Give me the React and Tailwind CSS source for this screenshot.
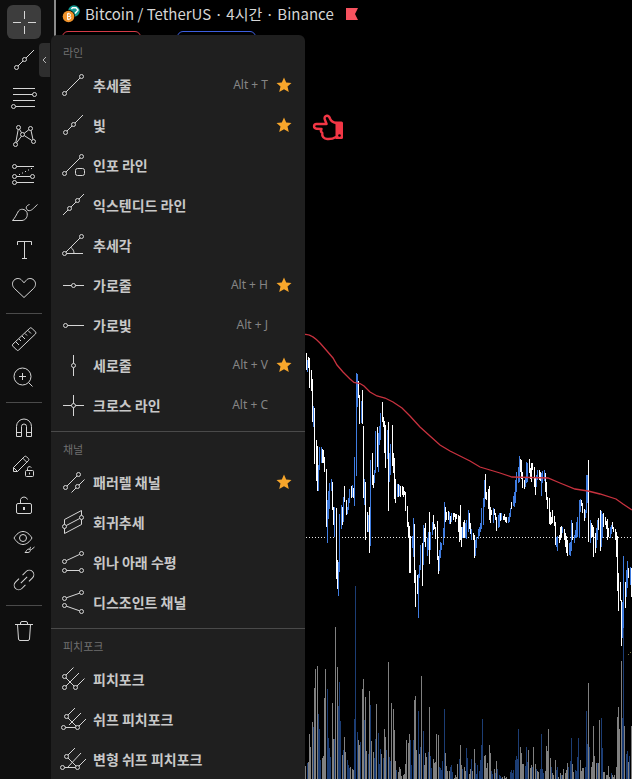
import React from "react";

const Dots = ({ points }) =>
  points.map(([x, y]) => <circle key={`${x}-${y}`} cx={x} cy={y} r="2" />);

function Icon({ d, dots = [], children }) {
  return (
    <svg
      viewBox="0 0 28 28"
      className="size-7 shrink-0 fill-none stroke-[#d6d6d6]"
      strokeWidth="1"
      aria-hidden="true"
    >
      {d && <path d={d} />}
      <Dots points={dots} />
      {children}
    </svg>
  );
}

const RAY = {
  d: "M8 20l5-5M16 12l8-8",
  dots: [[6.5, 21.5], [14.5, 13.5]],
};

const SECTIONS = [
  {
    title: "라인",
    items: [
      { label: "추세줄", keys: "Alt + T", star: true, d: "M7 21L21 7", dots: [[5.5, 22.5], [22.5, 5.5]] },
      { label: "빛", star: true, ...RAY },
      {
        label: "인포 라인",
        d: "M7 21L21 7M18.5 17.5h5a2 2 0 0 1 2 2v3a2 2 0 0 1-2 2h-5a2 2 0 0 1-2-2v-3a2 2 0 0 1 2-2z",
        dots: [[5.5, 22.5], [22.5, 5.5]],
      },
      { label: "익스텐디드 라인", d: "M4 24l5-5M12 16l5-5M20 8l5-5", dots: [[10.5, 17.5], [18.5, 9.5]] },
      { label: "추세각", d: "M7 21L21 7M7.5 22.5H24M12 16.5c2 1.5 3 3.5 3 6", dots: [[5.5, 22.5], [22.5, 5.5]] },
      { label: "가로줄", keys: "Alt + H", star: true, d: "M4 14.5h8.5M16.5 14.5h8.5", dots: [[14.5, 14.5]] },
      { label: "가로빛", keys: "Alt + J", d: "M8.5 14.5H25", dots: [[6.5, 14.5]] },
      { label: "세로줄", keys: "Alt + V", star: true, d: "M14.5 4v8.5M14.5 16.5v8.5", dots: [[14.5, 14.5]] },
      {
        label: "크로스 라인",
        keys: "Alt + C",
        d: "M14.5 4v8.5M14.5 16.5v8.5M4 14.5h8.5M16.5 14.5h8.5",
        dots: [[14.5, 14.5]],
      },
    ],
  },
  {
    title: "채널",
    items: [
      {
        label: "패러렐 채널",
        star: true,
        d: "M8 18L18 8M12.5 24.5L17 20M20 17l5.5-5.5",
        dots: [[6.5, 19.5], [19.5, 6.5], [18.5, 18.5]],
      },
      {
        label: "회귀추세",
        d: "M5.5 16.5v-5l17-9v5M22.5 11.5v5l-17 9v-5M7.3 17.5l13.4-7",
        dots: [[5.5, 18.5], [22.5, 9.5]],
      },
      {
        label: "위나 아래 수평",
        d: "M7.4 12.6l13.2-6.2M7.5 22.5h13",
        dots: [[5.5, 13.5], [22.5, 5.5], [5.5, 22.5], [22.5, 22.5]],
      },
      {
        label: "디스조인트 채널",
        d: "M7.4 9.8l13.2-4.6M7.4 18.2l13.2 4.6",
        dots: [[5.5, 10.5], [22.5, 4.5], [5.5, 17.5], [22.5, 23.5]],
      },
    ],
  },
  {
    title: "피치포크",
    items: [
      {
        label: "피치포크",
        d: "M7 10l7.5-7.5M7 13l8 8M7 21L20 8M18 21l7.5-7.5",
        dots: [[5.5, 11.5], [5.5, 22.5], [16.5, 22.5]],
      },
      {
        label: "쉬프 피치포크",
        d: "M9 10l7-7M9 13l8 8M10 20L22 8M20 21l7-7M6.5 22.5h10",
        dots: [[7.5, 11.5], [4.5, 22.5], [18.5, 22.5]],
      },
      {
        label: "변형 쉬프 피치포크",
        d: "M9 10l7-7M9 13l8 8M8.5 22.5L22 8M20 21l7-7M5.5 22.5h11",
        dots: [[7.5, 11.5], [3.5, 22.5], [18.5, 22.5]],
      },
    ],
  },
];

const TOOLS = [
  [
    { name: "십자선", active: true, d: "M14.5 3v8M14.5 18v8M3 14.5h8M18 14.5h8" },
    { name: "라인", ...RAY },
    {
      name: "피보나치",
      d: "M3 4.5h22M3 10.5h19.5M3 16.5h22M5.5 22.5H25",
      dots: [[24.5, 10.5], [3.5, 22.5]],
    },
    {
      name: "패턴",
      d: "M5.8 20.5L8.2 7.5M9.5 7.2l2 3.6M14.2 11.3l4.7-3.6M21 8.5l2 9M14.3 13.6l7.4 4.8M11.4 14.2l-4.8 6.6",
      dots: [[8.5, 5.5], [20.5, 6.5], [12.5, 12.5], [5.5, 22.5], [23.5, 19.5]],
    },
    {
      name: "예측",
      d: "M6.5 6.5H24M6.5 16.5h14M6.5 22.5H24M9 14.5h1M12 13h1M15 11.5h1M18 10h1M21 8.5h1",
      dots: [[4.5, 6.5], [4.5, 16.5], [22.5, 16.5], [4.5, 22.5]],
    },
    {
      name: "브러쉬",
      d: "M2.5 22.5H12c4-.4 6-4 5-8-2-4-6.5-4-8.5-1.5-2 3.5-3.5 7-6 9.5zM19.5 6.5c-3.5 1-4.5 4-1.5 6 3.5 1 5.5-2.5 9.5-6",
    },
    { name: "텍스트", d: "M7.5 9V5.5h14V9M14.5 5.5v17M12 22.5h5" },
    {
      name: "아이콘",
      d: "M14 23.5L4.5 14.5C2 12 1.8 8.5 4 6.2c2.4-2.4 6-2.2 8 .3l2 2.3 2-2.3c2-2.5 5.6-2.7 8-.3 2.2 2.3 2 5.8-.5 8.3z",
    },
  ],
  [
    {
      name: "측정",
      d: "M2.8 19.2L19.8 3.2q1-1 2 0l3.7 3.7q1 1 0 2L8.7 25q-1 1-2 0l-3.9-3.9q-1-1 0-1.9zM6 17l3 3M9 14l2 2M12 11l3 3M15 8.5l2 2M18 5.5l3 3",
    },
    { name: "확대", d: "M12.5 10v7M9 13.5h7M18.5 19.5l4 4", circle: [12.5, 13.5, 8.5] },
  ],
  [
    {
      name: "자석",
      d: "M6.5 22.5v-10a7.5 7.5 0 0 1 15 0v10h-5v-10a2.5 2.5 0 0 0-5 0v10zM6.5 18.5h5M16.5 18.5h5",
    },
    {
      name: "그리기 모드",
      d: "M3.5 19.5v-4l11-11q1-.7 2 .2l2 2q.8 1 0 1.8l-11 11zM12.8 6.2l4 4M3.5 15.5l4 4M16.5 18.5h6q1 0 1 1v4q0 1-1 1h-6q-1 0-1-1v-4q0-1 1-1zM17.5 18.5v-2a2 2 0 0 1 3.8-.8M19.5 20.5v2",
    },
    {
      name: "잠금",
      d: "M8 13.5h12q1.5 0 1.5 1.5v7q0 1.5-1.5 1.5H8q-1.5 0-1.5-1.5v-7q0-1.5 1.5-1.5zM10.5 13.5V9.5a3.7 3.7 0 0 1 7 0M13.5 17v3M14.5 17v3",
    },
    {
      name: "숨기기",
      d: "M4 10c2.5-4 5.5-6.5 9-6.5s6.5 2.5 9 6.5c-2.5 4-5.5 6.5-9 6.5S6.5 14 4 10zM15 24.5c1.5-1 1.5-3.5 4-3.5 2 .5 2 3-1 3.5zM21 19c-1.5.5-1.5 2.5.5 2.5L24.5 19",
      circle: [13, 10, 3.5],
    },
    { name: "링크", link: true },
  ],
  [
    {
      name: "삭제",
      d: "M5 7.5h18M10.5 7.5V6q0-1.5 1.5-1.5h4q1.5 0 1.5 1.5v1.5M7.5 7.5l1 14.5q.2 1.5 1.5 1.5h8q1.3 0 1.5-1.5l1-14.5",
    },
  ],
];

/* Series use sub-pixel steps of 1/3: position, tone, high[-low]. */
const parse = (text, x0, y0) =>
  text
    .trim()
    .split(/\s+/)
    .map((token) => {
      const [, x, tone, top, bottom] = token.match(/^(\d+)([a-z])(\d+)(?:-(\d+))?$/);
      return {
        x: x0 + Math.floor(x / 3),
        tone,
        top: y0 + Math.round(top / 3),
        bottom: bottom ? y0 + Math.round(bottom / 3) : 779,
      };
    });

const CANDLES = [
  ...parse(
    `19w98-150 22b120-155 25w112-145 28w114-205 34w150-212 37w178-305 40b258-320 43w264-432 49w360-482 52w378-512
     55b435-513 58b380-450 64b380-430 67w388-430 70w390-430 73w412-455 79w447-620 82b540-668 85b513-597 88b490-568
     94b478-512 97w487-570 100w560-615 103b562-650 109w565-777 112w720-806 115b725-828 118b582-756 124b555-628
     127w560-615 130b530-605 133w498-545 139w540-585 142b560-583 145b535-570 148b508-548 154w498-535 157b495-530
     160w505-535 163b412-557 169b158-467 172b162-260 175w183-235 178w225-312 184b242-310 187w210-312 190w318-535
     193b478-555 196w487-660 202w575-635 205b585-635 208w562-698 211b420-677 217w400-495 220w465-505 223b450-490
     226b333-458 232w322-440 235b340-455 238b318-375 241b280-360 247w246-307 250w290-320 253w303-400 256w315-443
     262b330-418 265w307-572 268b400-485 271b372-465 277w316-437 280w400-460 283w415-537 286w478-548 292b492-532
     295w493-532 298b495-528 301w497-530 307w497-525 310w500-530 313w512-525 316w515-572 322w557-622 325w607-655
     328w618-758 331w648-758 337b648-685 340b595-712 343w612-790 346w750-860 352w765-822 355b762-893 358b735-775
     361b675-750 367w668-797 370b615-735 373w625-665 376w608-680 382b655-707 385b637-690 388w576-733 391b635-690
     397b605-645 400w585-630 403w612-627 406w620-657 412w603-720 415w708-762 418b690-752 421b665-715 424b670-690
     430b625-675 433b546-650 436w560-605 439w575-600 445w573-600 448b577-612 451w587-612 454b578-605 460w580-600
     463w580-592 466w583-607 469w583-597 475w585-635 478w588-665 481w555-660 484w620-680 490w607-655 493w600-632
     496b612-630 499b600-658 505b570-635`,
    300,
    320
  ),
  ...parse(
    `1w225-325 4w290-350 7b290-325 13w272-325 16b280-325 19b270-325 25b240-278 28w250-297 31w280-312 34b298-330
     40w310-330 43w315-383 46b330-377 49b322-355 55b298-328 58b292-318 61b278-305 64b234-297 70b205-285 73b150-230
     76w132-208 79w185-210 85w178-238 88w168-270 91w232-280 94w240-255 100b235-280 103w237-255 106w250-270
     109w260-302 115b255-293 118b250-290 121w248-273 124b250-270 130w257-270 133w252-270 136w262-275 139w262-280
     145b262-278 148b250-275 151b235-262 154w215-238 160b198-228 163b185-230 166b150-220 169b125-185 175b110-160
     178b78-155 181w87-125 184w90-148 187w125-175 193w150-178 196b140-172 199b95-158 202b98-155 208w88-130
     211w115-147 214w98-155 217w100-120 223w110-170 226w145-195 229b135-170 232b120-150 238w120-150 241w125-153
     244b130-197 247b122-160 253b120-152 256w128-185 259w155-210 262w200-237 268w205-283 271w245-285 274w262-282
     277w240-280 283w258-287 286w275-345 289b320-350 292b318-362 298w315-340 301w290-330 304w288-320 307b290-308
     313w297-330 316w308-350 319w318-370 322w330-377 328b340-375 331b337-377 334b270-362 337w280-330 343b315-340
     346b300-325 349b275-325 352b262-320 358b210-325 361b208-245 364w210-228 367w220-250 373w237-272 376b240-265
     379b135-250 382b135-218 385w90-335 391b270-340 394w278-325 397w285-320 400w290-380 406w310-370 409b295-355
     412b270-330 415w265-300 421w240-362 424b242-352 427b252-325 430w250-290 436w262-285 439w272-298 442w268-330
     445w295-320 451b290-325 454b285-312 457w275-298 460w290-305 466w298-330 469w305-380 472w318-483 475w430-542
     481w455-512 484w510-648 487b515-625 490b378-595 496w455-535 499b420-500 502b393-475 505w413-443 511b410-465
     514w413-500`,
    460,
    430
  ),
];

const VOLUME = [
  ...parse(
    `16g558 22n550 25g546 28g462 31g501 37g426 40n440 43g323 46g267 52g258 55n402 58n447 61n540 67g534 70g528
     73g354 76g267 82n327 85n474 88n504 91n530 97g369 100g477 103n477 106g141 112g261 115n378 118n306 121n423
     127g525 130n510 133g471 136g516 142n540 145n555 148n563 151g560 157g567 160g570 163n417 166n18 172n456
     175g480 178g495 181n486 187g327 190g297 193n420 196g351 199g513 205n522 208g333 211n375 214g483 220g516
     223n534 226n477 229g372 235n459 238n552 241n507 244g522 250n533 253g447 256g471 259n510 265g246 268n531
     271n543 274g369 280g387 283g450 286g543 289n570 295g575 298g562 301g567 304g588 310g585 313g582 316g552
     319g480 325g489 328g462 331n480 334n555 340n480 343g360 346g348 349g510 355n393 358g522 361n500 364g288
     370n453 373g555 376g519 379g530 385n516 388g381 391n528 394n564 400g537 403g549 406g546 409g462 415g465
     418n560 421n563 424n570 427n543 433n387 436g519 439g558 442g573 448g573 451n562 454n555 457n576 463g594
     466g585 469g590 472g552 478n537`,
    300,
    580
  ),
  ...parse(
    `1g375 4g435 7n447 13g441 16g453 19n384 22n414 28g462 31g447 34n417 37g453 43g387 46n429 49n462 52n435
     58n453 61n420 64n375 67n297 73g408 76g405 79g444 82g429 88g375 91g399 94n453 97n462 103g447 106n459
     109g423 112n447 118n465 121n468 124n474 127g471 133g468 136g474 139g471 151n456 154n450 157n459 160n450
     166n420 169n408 172n417 175n327 181g381 184g399 187g432 190g432 196n438 199n381 202n426 205g390 211g444
     214g435 217n440 220g381 226g432 229n447 232g453 235g456 241n447 244n342 247n447 250n459 256g453 259g378
     262g393 265g327 271g414 274n441 277g459 280g465 286g420 289n450 292n441 295g471 301g460 304n465 307g465
     310g447 316g459 319g450 322g429 325n441 331n423 334n354 337g432 340g456 346n450 349n453 352n411 355n354
     361g420 364g453 367g444 370g444 376n441 379n273 382n372 385g189 388n381 394g441 397g426 400g318 403g408
     409g429 412n429 415g429 418g300 424n294 427n384 430g456 433g456 439g465 442g465 445g438 448g471 454n459
     457g465 460g471 463g465 469g441 472g291 475g261 478g327 484g123 487n294 490n0 493g318 499n402 502n393
     505g426 508n408 514g318`,
    460,
    620
  ),
];

const FILL = { w: "#ffffff", b: "#3f7ce0", g: "#808080", n: "#1c3d74" };

function Bars({ data }) {
  return data.map((bar, i) => (
    <rect key={i} x={bar.x} y={bar.top} width="1" height={bar.bottom - bar.top} fill={FILL[bar.tone]} />
  ));
}

function Chart() {
  return (
    <svg viewBox="56 56 576 723" className="block w-full" role="img" aria-label="Bitcoin / TetherUS">
      <Bars data={VOLUME} />
      <path d="M306 537.5H632" stroke="#e8e8e8" strokeDasharray="1 2" />
      <Bars data={CANDLES} />
      <path
        d="M305 334.5C311 334 316 339 320 343L327 351 333 358 337 365 343 372 350 379 354 382.5 360 383.5 364 386 370 392 377 396 385 398 393 402 402 408 410 416 420 427 430 436 440 445 450 451 460 456 470 461 480 467 490 470 500 473 512 477 548 478 560 483 575 489 588 491 600 494 616 499 623 504 632 510"
        fill="none"
        stroke="#c8323f"
        strokeWidth="1.3"
      />
      <path d="M628 654.5h1M630 652.5h1" stroke="#77774a" />
      <path
        d="M336 123c-3-.5-5-2-6-4.500-.6-1.800-1.500-3-3.200-2.800-2 .3-2.700 2-2 3.800l1.800 4.500h-10c-3.400.2-3.400 4.500 0 4.700l4.900.3c-1 1.500-.6 3 .8 4-.6 3.500 1.700 5.800 5 6 3.300.2 6.200-.5 8.700-2"
        fill="none"
        stroke="#f23645"
        strokeWidth="2.4"
        strokeLinejoin="round"
        strokeLinecap="round"
      />
      <path d="M335.5 121.500h6q1.500 0 1.500 1.500v14.500q0 1.500-1.500 1.500h-6z" fill="#f23645" />
      <circle cx="339.500" cy="135.500" r="1.300" fill="#000" />
    </svg>
  );
}

function ToolIcon({ tool }) {
  if (tool.link) {
    return (
      <Icon>
        <path
          transform="rotate(-45 14 14)"
          d="M11.5 9.5H6.5a4.5 4.5 0 0 0 0 9h5M16.5 9.5h5a4.5 4.5 0 0 1 0 9h-5M9.5 14h9"
        />
      </Icon>
    );
  }
  return (
    <Icon d={tool.d} dots={tool.dots}>
      {tool.circle && <circle cx={tool.circle[0]} cy={tool.circle[1]} r={tool.circle[2]} />}
    </Icon>
  );
}

function Toolbar() {
  return (
    <nav className="relative w-[50px] shrink-0 bg-[#0f0f0f] pt-[3px]">
      {TOOLS.map((group, i) => (
        <div key={i}>
          {i > 0 && <hr className="mx-1.5 my-1.5 w-9 border-t border-[#4a4a4a]" />}
          {group.map((tool) => (
            <div key={tool.name} className="flex h-[38px] w-12 items-center justify-center">
              <button
                type="button"
                aria-label={tool.name}
                className={
                  tool.active
                    ? "flex size-[34px] items-center justify-center rounded-md bg-[#3d3d3d]"
                    : "flex size-[34px] items-center justify-center rounded-md"
                }
              >
                <ToolIcon tool={tool} />
              </button>
            </div>
          ))}
        </div>
      ))}
      <button
        type="button"
        aria-label="메뉴 닫기"
        className="absolute top-[43px] right-0 flex h-[34px] w-[11px] items-center justify-center rounded-l bg-[#2e2e2e]"
      >
        <svg viewBox="0 0 5 8" className="h-2 w-[5px] fill-none stroke-[#b5b5b5]" aria-hidden="true">
          <path d="M4 1L1 4l3 3" />
        </svg>
      </button>
    </nav>
  );
}

function Star() {
  return (
    <svg viewBox="0 0 18 18" className="size-[18px] fill-[#f7a62b]" aria-hidden="true">
      <path d="M9 1.5l2.2 5 5.3.4-4 3.7 1.3 5.4L9 13.2 4.2 16l1.3-5.4-4-3.7 5.3-.4z" />
    </svg>
  );
}

function Menu() {
  return (
    <div className="absolute top-[35px] bottom-0 left-[51px] w-[254px] overflow-hidden rounded-t-md bg-[#1f1f1f]">
      {SECTIONS.map((section, i) => (
        <section key={section.title} className={i > 0 ? "border-t border-[#4a4a4a] pb-1.5" : "pb-1.5"}>
          <h2 className="flex h-[30px] items-center px-3 pt-1 text-[11px] text-[#707070]">{section.title}</h2>
          <ul>
            {section.items.map((item) => (
              <li key={item.label}>
                <button type="button" className="flex h-10 w-full items-center pr-3 pl-2 text-left">
                  <Icon d={item.d} dots={item.dots} />
                  <span className="ml-1.5 flex-1 text-sm font-bold text-[#c8c8c8]">{item.label}</span>
                  <span className="font-['Noto_Sans'] text-xs text-[#858585]">{item.keys}</span>
                  <span className="ml-[7px] size-[18px]">{item.star && <Star />}</span>
                </button>
              </li>
            ))}
          </ul>
        </section>
      ))}
    </div>
  );
}

function Header() {
  return (
    <header className="flex h-[31px] items-center pb-[3px] pl-1.5">
      <svg viewBox="0 0 18 18" className="size-[18px]" aria-hidden="true">
        <circle cx="12" cy="6" r="5.8" fill="#159a93" />
        <path d="M9.500 4.200l1-1.500h3.500l2 2.300-3 3.500" stroke="#fff" strokeWidth="1.4" fill="none" />
        <circle cx="6.5" cy="11.5" r="6.5" fill="#000" />
        <circle cx="6.5" cy="11.5" r="5.8" fill="#f0932b" />
        <path
          d="M5 8.8h2.3q1.4.2 1.2 1.4-.1 1-1.3 1.2 1.7 0 1.6 1.4-.2 1.4-1.7 1.4H5M5.6 8.8v5.4M5.5 11.4H7.5M6.7 7.8v1M6.7 14.2v1"
          stroke="#fff"
          fill="none"
        />
      </svg>
      <h1 className="ml-[5px] text-[15px] whitespace-nowrap text-[#d6d6d6]">Bitcoin / TetherUS · 4시간 · Binance</h1>
      <svg viewBox="0 0 12 12" className="ml-3 size-3 fill-[#f7525f]" aria-hidden="true">
        <path d="M0 0h12l-3 6 3 6H0z" />
      </svg>
    </header>
  );
}

export default function App() {
  return (
    <div className="relative flex min-h-screen bg-[#0f0f0f] font-['Noto_Sans_CJK_KR','Noto_Sans',sans-serif]">
      <Toolbar />
      <main className="ml-1 min-w-0 flex-1 overflow-hidden border-l-2 border-[#8a8a8a] bg-black">
        <Header />
        <div className="flex gap-9 pl-1.5">
          <button type="button" aria-label="매도" className="h-[25px] w-[79px] rounded-md border border-[#d63b47]" />
          <button type="button" aria-label="매수" className="h-[25px] w-[79px] rounded-md border border-[#3d5fe0]" />
        </div>
        <Chart />
      </main>
      <Menu />
    </div>
  );
}
